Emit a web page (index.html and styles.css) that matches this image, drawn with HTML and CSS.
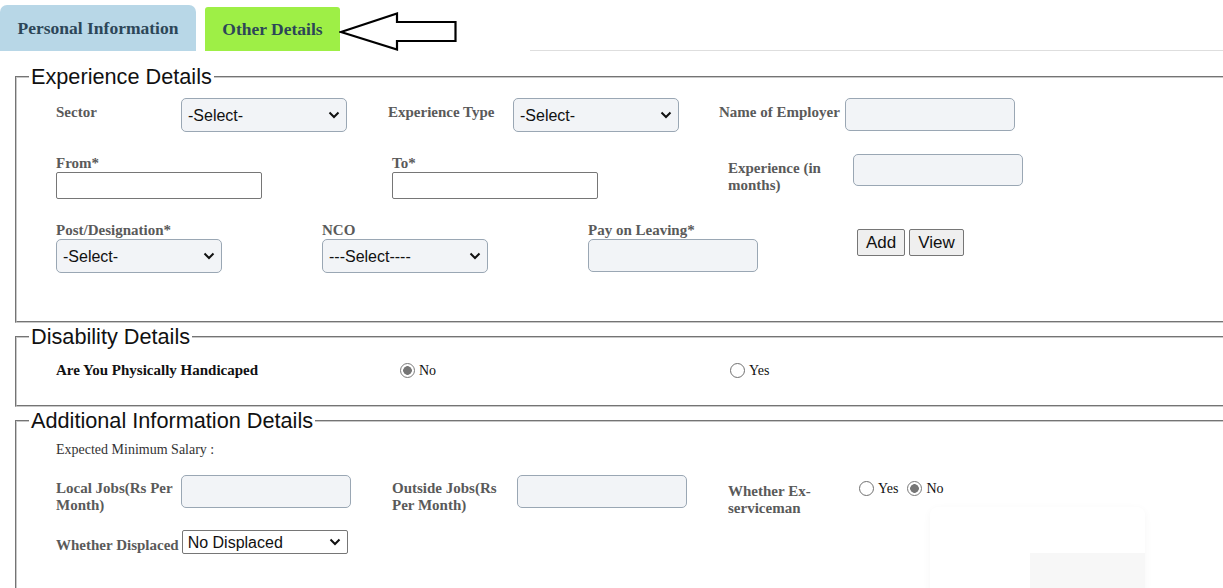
FILE: index.html
```html
<!DOCTYPE html>
<html lang="en">
<head>
  <meta charset="UTF-8">
  <title>Other Details</title>
  <link rel="stylesheet" href="styles.css">
</head>
<body>
<div class="tabs">
  <div class="tab tab-personal">Personal Information</div>
  <div class="tab tab-other">Other Details</div>
  <svg class="arrow" width="120" height="40" viewBox="0 0 120 40">
    <path d="M2 20 L58 1.5 L58 10 L116.5 10 L116.5 29 L58 29 L58 37.5 Z" fill="#fff" stroke="#000" stroke-width="2.2" stroke-linejoin="miter"/>
  </svg>
  <div class="tab-rule"></div>
</div>

<fieldset class="box box-exp">
  <legend>Experience Details</legend>
  <div class="box-body">
    <div class="row row-1">
      <div class="cell cell-a">
        <label class="lbl lbl-side">Sector</label>
        <select class="ctl"><option>-Select-</option></select>
      </div>
      <div class="cell cell-b">
        <label class="lbl lbl-side">Experience Type</label>
        <select class="ctl"><option>-Select-</option></select>
      </div>
      <div class="cell">
        <label class="lbl lbl-side lbl-emp">Name of Employer</label>
        <input class="ctl ctl-text" type="text">
      </div>
    </div>

    <div class="row row-2">
      <div class="cell cell-c stack">
        <label class="lbl">From*</label>
        <input class="plain" type="text">
      </div>
      <div class="cell cell-c stack">
        <label class="lbl">To*</label>
        <input class="plain" type="text">
      </div>
      <div class="cell">
        <label class="lbl lbl-side lbl-wrap">Experience (in months)</label>
        <input class="ctl ctl-text ctl-short" type="text">
      </div>
    </div>

    <div class="row row-3">
      <div class="cell cell-d stack">
        <label class="lbl">Post/Designation*</label>
        <select class="ctl"><option>-Select-</option></select>
      </div>
      <div class="cell cell-d stack">
        <label class="lbl">NCO</label>
        <select class="ctl"><option>---Select----</option></select>
      </div>
      <div class="cell cell-e stack">
        <label class="lbl">Pay on Leaving*</label>
        <input class="ctl ctl-text" type="text">
      </div>
      <div class="cell btns">
        <button>Add</button>
        <button>View</button>
      </div>
    </div>
  </div>
</fieldset>

<fieldset class="box box-dis">
  <legend>Disability Details</legend>
  <div class="box-body">
    <div class="row row-dis">
      <div class="cell cell-q"><span class="lbl lbl-dark">Are You Physically Handicaped</span></div>
      <div class="cell cell-no"><label class="opt"><input type="radio" name="ph" checked>No</label></div>
      <div class="cell"><label class="opt"><input type="radio" name="ph">Yes</label></div>
    </div>
  </div>
</fieldset>

<fieldset class="box box-add">
  <legend>Additional Information Details</legend>
  <div class="box-body">
    <p class="note">Expected Minimum Salary :</p>
    <div class="row row-sal">
      <div class="cell cell-c">
        <label class="lbl lbl-side lbl-wrap">Local Jobs(Rs Per Month)</label>
        <input class="ctl ctl-text" type="text">
      </div>
      <div class="cell cell-c">
        <label class="lbl lbl-side lbl-wrap">Outside Jobs(Rs Per Month)</label>
        <input class="ctl ctl-text" type="text">
      </div>
      <div class="cell">
        <label class="lbl lbl-side lbl-wrap lbl-ex">Whether Ex-serviceman</label>
        <div class="opts">
          <label class="opt"><input type="radio" name="ex">Yes</label>
          <label class="opt"><input type="radio" name="ex" checked>No</label>
        </div>
      </div>
    </div>
    <div class="row row-disp">
      <label class="lbl">Whether Displaced</label>
      <select class="plain-select"><option>No Displaced</option></select>
    </div>
  </div>
</fieldset>

<div class="ghost"><div class="ghost-foot"></div></div>
</body>
</html>
```

FILE: styles.css
```css
:root{
  --chevron: url("data:image/svg+xml,%3Csvg xmlns='http://www.w3.org/2000/svg' width='12' height='8' viewBox='0 0 12 8'%3E%3Cpath d='M1.5 1.5 L6 6 L10.5 1.5' fill='none' stroke='%23111' stroke-width='2'/%3E%3C/svg%3E");
}
body{
  margin: 0;
  width: 1223px;
  height: 588px;
  overflow: hidden;
  background: #fff;
  font-family: "Liberation Serif", "Times New Roman", serif;
  position: relative;
}

/* tabs */
.tabs{
  display: flex;
  align-items: flex-end;
  height: 51px;
}
.tab{
  font-weight: bold;
  font-size: 17.5px;
  color: #2c4658;
  display: flex;
  align-items: center;
  justify-content: center;
  box-sizing: border-box;
}
.tab-personal{
  width: 196px;
  height: 46px;
  background: #b8d7e7;
  border-radius: 7px 7px 0 0;
}
.tab-other{
  width: 135px;
  height: 44px;
  margin-left: 9px;
  background: #9eef46;
  border-radius: 3px 3px 0 0;
}
.arrow{
  align-self: flex-start;
  margin-top: 12px;
  margin-left: -1px;
}
.tab-rule{
  flex: 1;
  margin-left: 71px;
  border-bottom: 1px solid #dedede;
}

/* fieldsets */
.box{
  margin: 14px 0 0 15px;
  padding: 0;
  width: 1240px;
  box-sizing: border-box;
  border: 2px groove #c8c8c8;
  border-right: none;
}
.box legend{
  font-family: "Liberation Sans", Arial, sans-serif;
  font-size: 21.7px;
  line-height: 24px;
  color: #111;
  padding: 0 2px;
  margin-left: 12px;
}
.box-exp{ height: 258px; }
.box-dis{ margin-top: 2px; height: 82px; }
.box-add{ margin-top: 2px; height: 200px; }

.box-body{
  padding-left: 39px;
}

.row{
  display: flex;
  align-items: flex-start;
}
.cell{
  display: flex;
  align-items: flex-start;
  flex-shrink: 0;
}
.stack{
  flex-direction: column;
}
.cell-a{ width: 332px; }
.cell-b{ width: 331px; }
.cell-c{ width: 336px; }
.cell-d{ width: 266px; }
.cell-e{ width: 269px; }

.lbl{
  font-size: 15px;
  font-weight: bold;
  color: #5a5a5a;
  line-height: 18px;
  white-space: nowrap;
}
.lbl-side{
  width: 125px;
  flex-shrink: 0;
  padding-top: 5px;
}
.lbl-emp{ width: 126px; }
.lbl-wrap{
  white-space: normal;
  line-height: 17px;
}
.lbl-ex{ width: 131px; padding-top: 8px; }
.lbl-dark{ color: #111; }

/* controls */
.ctl{
  appearance: none;
  width: 166px;
  height: 34px;
  box-sizing: border-box;
  border: 1px solid #9aa7b4;
  border-radius: 5px;
  background: #f2f4f7 var(--chevron) no-repeat right 6px center;
  font-family: "Liberation Sans", Arial, sans-serif;
  font-size: 16px;
  color: #111;
  padding: 0 6px;
  margin: 0;
}
.ctl-text{
  width: 170px;
  height: 33px;
  background-image: none;
}
.ctl-short{ height: 32px; }

.plain{
  width: 206px;
  height: 27px;
  box-sizing: border-box;
  border: 1px solid #767676;
  border-radius: 2px;
  margin: 0;
  font-size: 16px;
}
.plain-select{
  appearance: none;
  width: 166px;
  height: 24px;
  box-sizing: border-box;
  border: 1px solid #767676;
  border-radius: 2px;
  background: #fff var(--chevron) no-repeat right 6px center;
  font-family: "Liberation Sans", Arial, sans-serif;
  font-size: 16px;
  color: #111;
  margin: 0 0 0 3px;
  padding: 0 5px;
}

.row-1{ padding-top: 9px; }
.row-2{ margin-top: 22px; }
.row-2 .lbl-wrap{ padding-top: 6px; }
.row-3{ margin-top: 22px; }

.btns{
  margin-top: 8px;
  gap: 4px;
}
.btns button{
  height: 27px;
  font-family: "Liberation Sans", Arial, sans-serif;
  font-size: 17px;
  color: #111;
  background: #efefef;
  border: 1px solid #767676;
  border-radius: 2px;
  padding: 0 8px;
  margin: 0;
}

/* radios */
.opt{
  display: inline-flex;
  align-items: center;
  font-size: 14px;
  color: #111;
}
.opt input{
  appearance: none;
  width: 15px;
  height: 15px;
  margin: 0 4px 0 0;
  border: 1px solid #707070;
  border-radius: 50%;
  background: #fff;
  box-sizing: border-box;
  position: relative;
  top: -1px;
}
.opt input:checked{
  border-color: #7a7a7a;
  background: radial-gradient(circle, #767676 0 4px, #fff 4.6px);
}

.row-dis{
  margin-top: 11px;
  align-items: center;
}
.row-dis .opt{ margin-top: 3px; }
.cell-q{ width: 344px; }
.cell-no{ width: 330px; }

.note{
  margin: 8px 0 0;
  font-size: 14px;
  line-height: 18px;
  color: #333;
}
.row-sal{ margin-top: 16px; }
.opts{
  display: flex;
  gap: 9px;
  padding-top: 6px;
}
.row-disp{
  margin-top: 13px;
  align-items: flex-end;
}
.row-disp .lbl{ line-height: 17px; }

/* faint floating card bottom right */
.ghost{
  position: absolute;
  left: 930px;
  top: 507px;
  width: 215px;
  height: 90px;
  background: #fff;
  border-radius: 8px;
  box-shadow: 0 2px 8px rgba(0,0,0,0.04);
}
.ghost-foot{
  position: absolute;
  right: 0;
  top: 46px;
  width: 115px;
  height: 44px;
  background: #f7f7f7;
  border-radius: 0 0 8px 0;
}
```
